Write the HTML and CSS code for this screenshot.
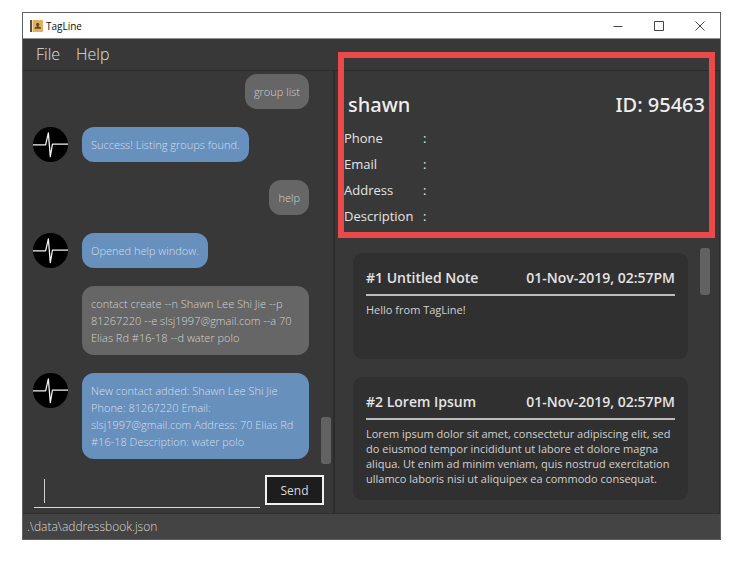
FILE: index.html
```html
<!DOCTYPE html>
<html lang="en">
<head>
<meta charset="utf-8">
<title>TagLine</title>
<link rel="stylesheet" href="styles.css">
</head>
<body>
<svg class="defs" aria-hidden="true">
  <symbol id="pulse" viewBox="0 0 36 36">
    <circle cx="18" cy="18" r="18" fill="#000"/>
    <path d="M0 18.5H13L15.8 6L17.8 30.5L20 17.5H36" fill="none" stroke="#f4f4f4" stroke-width="1.3" stroke-linejoin="round"/>
  </symbol>
</svg>
<div class="window">
  <header class="titlebar">
    <svg class="app-icon" viewBox="0 0 13 12" aria-hidden="true">
      <rect width="13" height="12" rx="1" fill="#e0b05c"/>
      <rect width="2" height="12" fill="#5b4a40"/>
      <rect x="2" width="1" height="12" fill="#f3dca8"/>
      <circle cx="7.7" cy="4.4" r="1.6" fill="#5b4630"/>
      <path d="M7 5h1.4v1.6l2.4.7v1.5H4.8V7.300l2.200-.7z" fill="#5b4630"/>
    </svg>
    <span class="app-name">TagLine</span>
    <div class="controls">
      <button type="button" aria-label="Minimize"><svg viewBox="0 0 10 10"><path d="M0.500 5.500H9.500"/></svg></button>
      <button type="button" aria-label="Maximize"><svg viewBox="0 0 10 10"><path d="M0.500 0.500H9.500V9.500H0.500Z"/></svg></button>
      <button type="button" aria-label="Close"><svg viewBox="0 0 10 10"><path d="M0.500 0.500L9.500 9.500M9.500 0.500L0.500 9.500"/></svg></button>
    </div>
  </header>
  <nav class="menubar">
    <button type="button">File</button>
    <button type="button">Help</button>
  </nav>
  <main class="split">
    <section class="chat">
      <div class="scroll-area">
        <div class="messages">
          <div class="row user"><p class="bubble">group list</p></div>
          <div class="row"><svg class="avatar"><use href="#pulse"/></svg><p class="bubble">Success! Listing groups found.</p></div>
          <div class="row user"><p class="bubble">help</p></div>
          <div class="row"><svg class="avatar"><use href="#pulse"/></svg><p class="bubble">Opened help window.</p></div>
          <div class="row user"><p class="bubble">contact create --n Shawn Lee Shi Jie --p 81267220 --e slsj1997@gmail.com --a 70 Elias Rd #16-18 --d water polo</p></div>
          <div class="row"><svg class="avatar"><use href="#pulse"/></svg><p class="bubble">New contact added: Shawn Lee Shi Jie Phone: 81267220 Email: slsj1997@gmail.com Address: 70 Elias Rd #16-18 Description: water polo</p></div>
        </div>
        <div class="track at-end"><div class="thumb"></div></div>
      </div>
      <form class="composer">
        <div class="entry"><span class="caret"></span><input type="text" aria-label="Command"></div>
        <button type="button">Send</button>
      </form>
    </section>
    <section class="detail">
      <div class="contact">
        <div class="contact-head"><h1>shawn</h1><span>ID: 95463</span></div>
        <dl>
          <dt>Phone</dt><dd>:</dd>
          <dt>Email</dt><dd>:</dd>
          <dt>Address</dt><dd>:</dd>
          <dt>Description</dt><dd>:</dd>
        </dl>
        <div class="highlight"></div>
      </div>
      <div class="scroll-area">
        <div class="notes">
          <article class="note">
            <header><h2>#1 Untitled Note</h2><time>01-Nov-2019, 02:57PM</time></header>
            <p>Hello from TagLine!</p>
          </article>
          <article class="note">
            <header><h2>#2 Lorem Ipsum</h2><time>01-Nov-2019, 02:57PM</time></header>
            <p>Lorem ipsum dolor sit amet, consectetur adipiscing elit, sed do eiusmod tempor incididunt ut labore et dolore magna aliqua. Ut enim ad minim veniam, quis nostrud exercitation ullamco laboris nisi ut aliquipex ea commodo consequat.</p>
          </article>
        </div>
        <div class="track"><div class="thumb"></div></div>
      </div>
    </section>
  </main>
  <footer class="status">.\data\addressbook.json</footer>
</div>
</body>
</html>
```
FILE: styles.css
```css
* { box-sizing: border-box; }
body {
  margin: 0;
  padding: 12px 18px 23px 22px;
  background: #fff;
  color: #e4e4e4;
  font-family: "Open Sans", "Noto Sans", sans-serif;
  font-size: 12px;
}
h1, h2, p, dl, dd { margin: 0; }
button { font-family: inherit; border: 0; padding: 0; background: none; color: inherit; }
.defs { position: absolute; width: 0; height: 0; }

.window { border: 1px solid #606060; background: #383838; }

.titlebar {
  display: flex;
  align-items: center;
  height: 26px;
  padding-left: 7px;
  background: #fff;
  color: #111;
  border-bottom: 1px solid #8a8f8e;
}
.app-icon { width: 13px; height: 12px; }
.app-name { margin-left: 3px; font-size: 10px; }
.controls { display: flex; margin-left: auto; }
.controls button { width: 41px; height: 25px; display: grid; place-items: center; }
.controls svg { width: 10px; height: 10px; fill: none; stroke: #444; stroke-width: 1; }

.menubar {
  display: flex;
  gap: 16px;
  height: 32px;
  padding: 0 13px 2px;
  border-bottom: 1px solid #2b2b2b;
}
.menubar button { font-size: 16px; font-weight: 300; color: #e0e0e0; }

.split { display: grid; grid-template-columns: minmax(0, 312fr) minmax(0, 385fr); }
.chat { display: flex; flex-direction: column; border-right: 2px solid #2c2c2c; }
.scroll-area { display: flex; flex: 1; }
.track { display: flex; flex: none; flex-direction: column; width: 10px; }
.track.at-end { justify-content: flex-end; }
.thumb { height: 47px; border-radius: 3px; background: #626262; }

.messages {
  display: flex;
  flex: 1;
  flex-direction: column;
  gap: 18px;
  min-width: 0;
  padding: 3px 12px 5px 10px;
}
.row { display: flex; align-items: flex-start; gap: 14px; }
.row.user { justify-content: flex-end; padding-left: 49px; }
.avatar { flex: none; width: 35px; height: 35px; }
.bubble {
  padding: 9px;
  border-radius: 12px;
  background: #6890bd;
  color: #d3dfed;
  font-size: 11px;
  font-weight: 300;
  line-height: 17px;
}
.user .bubble { background: #666; color: #d2d2d2; }

.chat .track { margin-right: 2px; }
.composer { display: flex; gap: 5px; padding: 11px 9px 5px 11px; }
.entry { display: flex; flex: 1; align-items: flex-start; border-bottom: 1px solid #d8d8d8; padding-left: 10px; }
.caret { flex: none; width: 1px; height: 24px; margin-top: 4px; background: #d0d0d0; }
.entry input { flex: 1; min-width: 0; height: 32px; border: 0; outline: 0; background: none; color: #e4e4e4; font: inherit; caret-color: transparent; }
.composer button {
  width: 59px;
  height: 30px;
  border: 2px solid #f0f0f0;
  background: #1d1d1d;
  color: #d8d8d8;
  font-size: 12px;
}

.detail { display: flex; flex-direction: column; min-width: 0; border-right: 1px solid #2c2c2c; }
.contact { position: relative; padding: 18px 14px 0 9px; }
.contact-head { display: flex; justify-content: space-between; padding-left: 4px; line-height: 32px; font-family: "Noto Sans", sans-serif; font-size: 20px; font-weight: 500; color: #eee; }
.contact h1 { font-size: 20px; font-weight: 500; }
.contact dl { display: grid; grid-template-columns: 79px 1fr; padding-top: 4px; font-size: 13px; line-height: 26px; }
.highlight { position: absolute; top: -19px; right: 4px; bottom: -9px; left: 3px; border: 6px solid #ea4b4a; pointer-events: none; }

.contact + .scroll-area { padding: 19px 9px 13px 18px; }
.notes { display: flex; flex: 1; flex-direction: column; gap: 18px; min-width: 0; padding-top: 5px; }
.detail .track { margin-left: 12px; }
.note { min-height: 106px; padding: 13px 13px 14px; border-radius: 9px; background: #303030; }
.note header {
  display: flex;
  justify-content: space-between;
  padding-bottom: 5px;
  border-bottom: 2px solid #bdbdbd;
  line-height: 23px;
  font-size: 14px;
  font-weight: 600;
}
.note h2 { font-size: 14px; font-weight: 600; }
.note p { padding-top: 6px; font-size: 11px; line-height: 15px; color: #d0d0d0; }

.status { height: 26px; padding: 0 4px; border-top: 1px solid #2f2f2f; background: #444; font-size: 12px; font-weight: 300; line-height: 26px; color: #d8d8d8; }
```
